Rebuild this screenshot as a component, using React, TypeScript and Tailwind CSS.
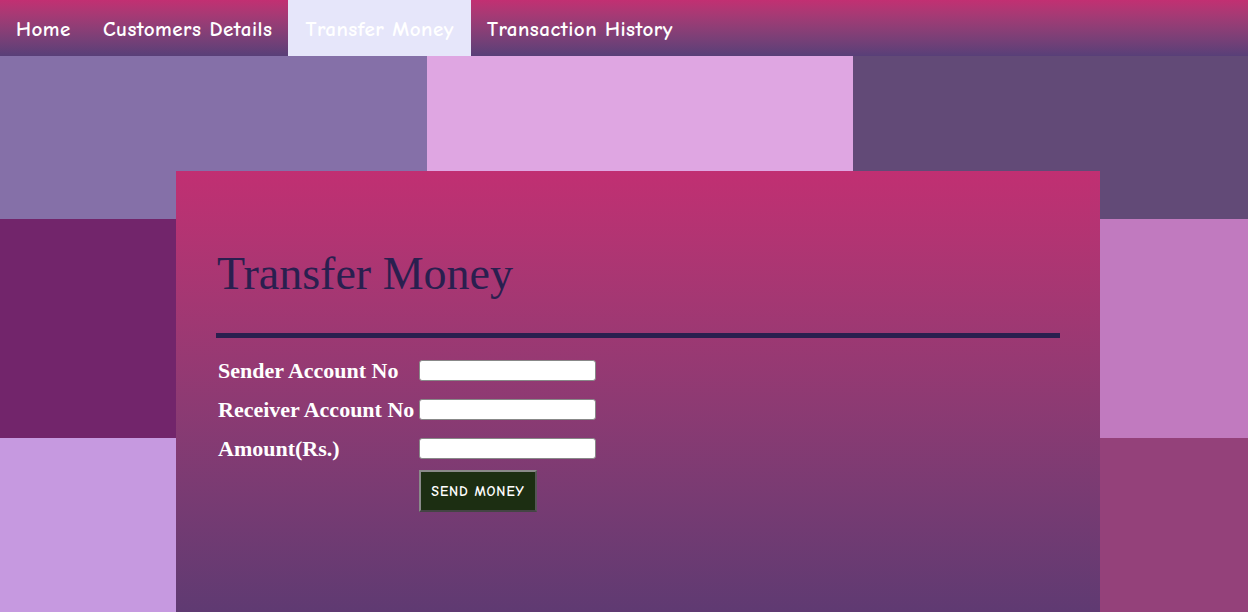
import React from "react";

const navFont = { fontFamily: '"Comic Sans MS", "Comic Neue", "Noto Sans", sans-serif' };

export default function App() {
  const tabs = ["Home", "Customers Details", "Transfer Money", "Transaction History"];
  return (
    <div className="relative h-[612px] w-[1248px] overflow-hidden">
      {/* background tiles */}
      <div className="absolute inset-0 grid grid-cols-[427px_426px_395px] grid-rows-[219px_219px_219px]">
        <div className="bg-[#8570a8]" />
        <div className="bg-[#dfa6e2]" />
        <div className="bg-[#624a77]" />
        <div className="bg-[#72256b]" />
        <div className="bg-[#b06aa8]" />
        <div className="bg-[#c17abf]" />
        <div className="bg-[#c699e0]" />
        <div className="bg-[#8a5a9a]" />
        <div className="bg-[#94417a]" />
      </div>

      <div className="relative flex flex-col">
        <nav
          className="flex h-[56px] bg-gradient-to-b from-[#c22f72] to-[#583f78] text-[21px] font-bold text-white"
          style={navFont}
        >
          {tabs.map((t) => (
            <div
              key={t}
              className={
                t === "Transfer Money"
                  ? "flex items-center bg-[#e6e6fa] px-[17px] pt-[4px] tracking-[0.5px] text-[#ffffff]"
                  : "flex items-center px-[16px] pt-[4px] tracking-[0.5px]"
              }
            >
              {t}
            </div>
          ))}
        </nav>

        <div className="ml-[176px] mt-[115px] h-[441px] w-[924px] bg-gradient-to-b from-[#c12f72] to-[#5f3a72] px-[40px] pt-[73px]">
          <h1
            className="pl-[1px] text-[46px] leading-[60px] text-[#2a1f4f]"
            style={{ fontFamily: '"Liberation Serif", serif' }}
          >
            Transfer Money
          </h1>
          <div className="mt-[29px] h-[5px] bg-[#2a1f4f]" />
          <div
            className="mt-[22px] flex flex-col gap-[18px] pl-[2px] text-[22px] font-bold text-white"
            style={{ fontFamily: '"Liberation Serif", serif' }}
          >
            {["Sender Account No", "Receiver Account No", "Amount(Rs.)"].map((l) => (
              <div key={l} className="flex h-[21px] items-center">
                <span className="w-[201px] whitespace-nowrap tracking-[0px]">{l}</span>
                <input
                  className="h-[21px] w-[177px] rounded-[3px] border border-[#888] bg-white"
                  type="text"
                />
              </div>
            ))}
            <div className="flex pl-[201px]">
              <button
                className="mt-[-7px] h-[42px] w-[118px] border-2 border-t-[#8a8a8a] border-l-[#8a8a8a] border-r-[#555] border-b-[#444] bg-[#1c2e12] text-[14px] font-bold tracking-[0.9px] text-white"
                style={navFont}
              >
                SEND MONEY
              </button>
            </div>
          </div>
        </div>
      </div>
    </div>
  );
}
